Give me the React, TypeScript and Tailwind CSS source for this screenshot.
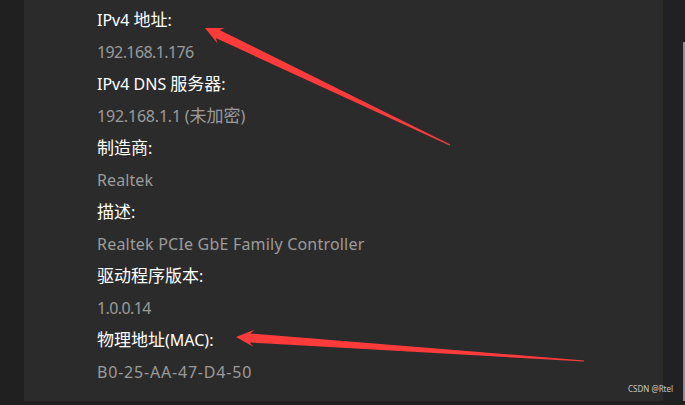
import React from 'react';

type Row = { label: string; value: string; track: string };

const rows: Row[] = [
  { label: 'IPv4 地址:', value: '192.168.1.176', track: 'tracking-[-0.6px]' },
  { label: 'IPv4 DNS 服务器:', value: '192.168.1.1 (未加密)', track: 'tracking-[-0.2px]' },
  { label: '制造商:', value: 'Realtek', track: 'tracking-[0.1px]' },
  { label: '描述:', value: 'Realtek PCIe GbE Family Controller', track: 'tracking-[0.2px]' },
  { label: '驱动程序版本:', value: '1.0.0.14', track: 'tracking-[-0.6px]' },
  { label: '物理地址(MAC):', value: 'B0-25-AA-47-D4-50', track: 'tracking-[0.8px]' },
];

// CJK glyphs sit a bit larger than the latin runs in the original
function Mixed({ text }: { text: string }) {
  const parts = text.split(/([\u4e00-\u9fff]+)/);
  return (
    <>
      {parts.map((p, i) =>
        /[\u4e00-\u9fff]/.test(p) ? (
          <span key={i} className="text-[17px] leading-none tracking-normal">
            {p}
          </span>
        ) : (
          <React.Fragment key={i}>{p}</React.Fragment>
        )
      )}
    </>
  );
}

// tapered annotation arrow: tip -> tail, shaft narrows to a point
function arrowPoints(tip: [number, number], tail: [number, number], headLen = 18, headHalf = 8.5, shaftHalf = 4.5) {
  const dx = tail[0] - tip[0];
  const dy = tail[1] - tip[1];
  const len = Math.hypot(dx, dy);
  const ux = dx / len;
  const uy = dy / len;
  const nx = -uy;
  const ny = ux;
  const bx = tip[0] + ux * headLen;
  const by = tip[1] + uy * headLen;
  const ix = tip[0] + ux * (headLen - 4);
  const iy = tip[1] + uy * (headLen - 4);
  const pts = [
    [tip[0], tip[1]],
    [bx + nx * headHalf, by + ny * headHalf],
    [ix + nx * shaftHalf, iy + ny * shaftHalf],
    [tail[0] + nx * 0.6, tail[1] + ny * 0.6],
    [tail[0] - nx * 0.6, tail[1] - ny * 0.6],
    [ix - nx * shaftHalf, iy - ny * shaftHalf],
    [bx - nx * headHalf, by - ny * headHalf],
  ];
  return pts.map((p) => `${p[0].toFixed(1)},${p[1].toFixed(1)}`).join(' ');
}

export default function App() {
  return (
    <div
      className="relative w-[685px] h-[405px] overflow-hidden bg-[#202020] flex flex-col"
      style={{ fontFamily: '"Noto Sans", "Noto Sans CJK SC", sans-serif' }}
    >
      <div className="flex flex-1">
        <div className="w-[24px] bg-[#202020]" />
        {/* details panel */}
        <div className="w-[639px] bg-[#2c2b2b] pl-[73px] pt-[4px]">
          {rows.map((r) => (
            <div key={r.label}>
              <div className="h-[32px] leading-[32px] text-[16px] text-white whitespace-nowrap">
                <Mixed text={r.label} />
              </div>
              <div className={`h-[32px] leading-[32px] text-[16px] text-[#9b9b9b] whitespace-nowrap ${r.track}`}>
                <Mixed text={r.value} />
              </div>
            </div>
          ))}
        </div>
        {/* scrollbar track */}
        <div className="flex-1 bg-[#212124] flex justify-end">
          <div className="w-[2px] mt-[42px] bg-[#8f8f8f]" />
        </div>
      </div>
      <div className="h-[4px] bg-[#202020]" />

      <svg className="absolute inset-0 pointer-events-none" width={685} height={405}>
        <polygon points={arrowPoints([205, 28], [450, 145])} fill="#fe3b3b" />
        <polygon points={arrowPoints([236, 337], [584, 361])} fill="#fe3b3b" />
      </svg>

      <div className="absolute left-[628px] top-[385px] text-[8px] text-[#c9c9c9] leading-none">
        CSDN @Rtel
      </div>
    </div>
  );
}
